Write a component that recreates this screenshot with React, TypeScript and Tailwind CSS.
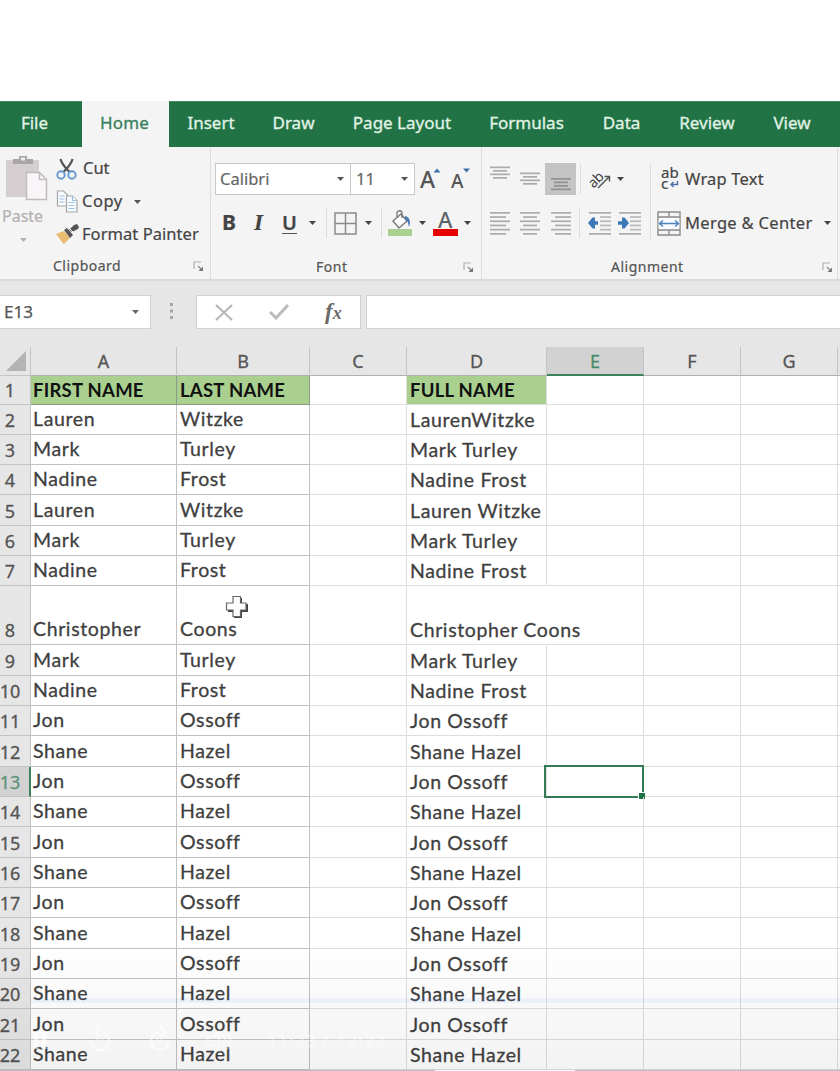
import React from "react";

const people: [string, string, string][] = [
  ["Lauren", "Witzke", "LaurenWitzke"],
  ["Mark", "Turley", "Mark Turley"],
  ["Nadine", "Frost", "Nadine Frost"],
  ["Lauren", "Witzke", "Lauren Witzke"],
  ["Mark", "Turley", "Mark Turley"],
  ["Nadine", "Frost", "Nadine Frost"],
  ["Christopher", "Coons", "Christopher Coons"],
  ["Mark", "Turley", "Mark Turley"],
  ["Nadine", "Frost", "Nadine Frost"],
  ...Array.from({ length: 12 }, (_, i): [string, string, string] =>
    i % 2 === 0 ? ["Jon", "Ossoff", "Jon Ossoff"] : ["Shane", "Hazel", "Shane Hazel"]
  ),
];

function rowHeight(n: number) {
  if (n === 1) return "h-[29px]";
  if (n === 8) return "h-[59px]";
  if (n === 5) return "h-[31px]";
  if (n > 8 && n % 3 === 0) return "h-[31px]";
  return "h-[30px]";
}

function Caret({ className = "" }: { className?: string }) {
  return (
    <svg className={"shrink-0 " + className} width="7" height="4" viewBox="0 0 7 4">
      <path d="M0 0h7L3.500 4z" fill="currentColor" />
    </svg>
  );
}

function Launcher() {
  return (
    <svg width="11" height="11" viewBox="0 0 11 11" fill="none">
      <path d="M1 8V1h7" stroke="#b0b0b0" strokeWidth="1.200" />
      <path d="M5 5l3 3" stroke="#888" strokeWidth="1.200" />
      <path d="M10 5.500V10H5.500z" fill="#777" />
    </svg>
  );
}

function Lines({ rows, color = "#ababab" }: { rows: [number, number, number][]; color?: string }) {
  return (
    <svg width="22" height="26" viewBox="0 0 22 26" className="shrink-0">
      {rows.map(([x, y, w]) => (
        <rect key={y} x={x} y={y} width={w} height="1.700" fill={color} />
      ))}
    </svg>
  );
}

function Indent({ right = false }: { right?: boolean }) {
  return (
    <svg width="24" height="26" viewBox="0 0 24 26" className="shrink-0">
      {[2, 23].map((y) => (
        <rect key={y} x="1" y={y} width="22" height="1.700" fill="#ababab" />
      ))}
      {[6.2, 10.4, 14.6, 18.8].map((y) => (
        <rect key={y} x="12" y={y} width="11" height="1.700" fill="#b8b8b8" />
      ))}
      {right ? (
        <path d="M0 11.200h4V7.500h2.500l4.500 5.500-4.500 5.500H4v-3.700H0z" fill="#3a78b8" />
      ) : (
        <path d="M10 11.200H7V7.500H4.500L0 13l4.500 5.500H7v-3.700h3z" fill="#3a78b8" />
      )}
    </svg>
  );
}

function Tabs() {
  const tab = "flex items-center justify-center shrink-0 whitespace-nowrap pb-[3px]";
  return (
    <nav className="flex h-[46px] bg-[#217346] text-[17px] text-[#e2f3e6] border-t border-[#3f8a60] [-webkit-text-stroke:0.3px]">
      <div className={tab + " w-[82px] pr-[13px]"}>File</div>
      <div className={tab + " w-[87px] bg-[#f4f4f4] text-[#397f5b] -mt-px h-[47px] pr-[2px] tracking-[0.2px]"}>Home</div>
      <div className={tab + " w-[84px]"}>Insert</div>
      <div className={tab + " w-[81px]"}>Draw</div>
      <div className={tab + " w-[136px]"}>Page Layout</div>
      <div className={tab + " w-[113px]"}>Formulas</div>
      <div className={tab + " w-[77px]"}>Data</div>
      <div className={tab + " w-[94px]"}>Review</div>
      <div className={tab + " w-[76px]"}>View</div>
    </nav>
  );
}

function Clipboard() {
  return (
    <section className="flex flex-col w-[210px] shrink-0">
      <div className="flex h-[107px]">
        <div className="w-[56px] flex flex-col items-start pt-[8px] text-[#b5b0b0]">
          <svg width="44" height="47" viewBox="0 0 44 47" className="ml-[5px]">
            <rect x="1" y="5" width="33" height="37" rx="1" fill="#d4ced1" />
            <path d="M8 4h6V1h8v3h6v5H8z" fill="#aaa5a7" />
            <rect x="16" y="2.500" width="4" height="3" fill="#eee" />
            <path d="M21.500 17.500h13l7 7v20h-20z" fill="#f8f5f9" stroke="#c0babd" strokeWidth="1.500" />
            <path d="M34.500 17.500v7h7" fill="none" stroke="#c0babd" strokeWidth="1.500" />
          </svg>
          <span className="text-[16px] leading-[22px] ml-[2px] mt-[3px]">Paste</span>
          <Caret className="ml-[20px] mt-[11px]" />
        </div>
        <div className="flex flex-col text-[16.500px] text-[#444] pt-[5px]">
          <div className="flex h-[33px] items-center gap-[6px]">
            <svg width="21" height="22" viewBox="0 0 21 22" fill="none">
              <path d="M4.500 1c1 5 5 9 9 13M16.500 1c-1 5-5 9-9 13" stroke="#555" strokeWidth="2.200" />
              <circle cx="5" cy="17" r="3.700" stroke="#6398cf" strokeWidth="1.900" />
              <circle cx="16" cy="17" r="3.700" stroke="#6398cf" strokeWidth="1.900" />
            </svg>
            <span>Cut</span>
          </div>
          <div className="flex h-[33px] items-center gap-[4px]">
            <svg width="22" height="23" viewBox="0 0 22 23" fill="#f8fbff" stroke="#a5a5a5" strokeWidth="1.200">
              <path d="M1.500 1h6l4 4v11h-10z" />
              <path d="M3.500 6h5M3.500 9h5M3.500 12h5" stroke="#9dbedf" />
              <path d="M10.500 6h6l4.500 4.500V22H10.500z" />
              <path d="M16.500 6v4.500H21M12.500 12.500h6M12.500 15.500h6M12.500 18.500h6" stroke="#9dbedf" />
            </svg>
            <span className="tracking-[0.500px]">Copy</span>
            <Caret className="ml-[7px] text-[#555]" />
          </div>
          <div className="flex h-[33px] items-center gap-[3px]">
            <svg width="23" height="21" viewBox="0 0 23 21">
              <path d="M0 10l8-3 6 7-6 6-2-2z" fill="#e9bc70" />
              <path d="M8 6l3-2 6 7-3 3z" fill="#555" />
              <path d="M13 6l5-5 3-1 2 3-1 2-6 3z" fill="#555" />
              <path d="M13 4l4 4" stroke="#f4f4f4" strokeWidth="1" />
            </svg>
            <span className="whitespace-nowrap tracking-[0.050px]">Format Painter</span>
          </div>
        </div>
      </div>
      <div className="flex h-[27px] items-center text-[14px] text-[#555]">
        <span className="pl-[53px] flex-1 tracking-[0.500px]">Clipboard</span>
        <span className="mr-[6px] mt-px"><Launcher /></span>
      </div>
    </section>
  );
}

function FontGroup() {
  return (
    <section className="flex flex-col w-[271px] shrink-0 border-l border-[#dcdcdc]">
      <div className="flex h-[32px] mt-[16px] ml-[4px] items-center">
        <div className="flex items-center justify-between w-[136px] h-[32px] bg-white border border-[#c8c8c8] pl-[4px] pr-[6px] text-[16.500px] text-[#666]">
          Calibri <Caret className="text-[#555]" />
        </div>
        <div className="flex items-center justify-between w-[64px] h-[32px] bg-white border border-l-0 border-[#c8c8c8] pl-[5px] pr-[6px] text-[16.500px] text-[#666]">
          11 <Caret className="text-[#555]" />
        </div>
        <svg width="50" height="26" viewBox="0 0 50 26" className="ml-[5px] overflow-visible">
          <text x="0" y="22" fontFamily="Noto Sans" fontSize="23" fontWeight="500" fill="#555">A</text>
          <path d="M13.500 6.500L17 2.500l3.500 4z" fill="#3a6fa8" />
          <text x="31" y="22" fontFamily="Noto Sans" fontSize="19" fontWeight="500" fill="#555">A</text>
          <path d="M43 2.500h7l-3.500 4z" fill="#3a6fa8" />
        </svg>
      </div>
      <div className="flex h-[32px] mt-[12px] items-center text-[#444]">
        <b className="text-[21px] w-[16px] ml-[11px]">B</b>
        <span className="font-['Liberation_Serif'] italic font-bold text-[23px] w-[16px] ml-[16px]">I</span>
        <span className="text-[20px] font-semibold leading-[20px] border-b-[1.500px] border-[#555] w-[15px] text-center ml-[12px]">U</span>
        <Caret className="ml-[12px]" />
        <span className="w-px h-[30px] bg-[#dcdcdc] ml-[10px]" />
        <svg width="23" height="23" viewBox="0 0 23 23" className="ml-[7px] -mr-px" fill="none" stroke="#8a8a8a" strokeWidth="1.500">
          <path d="M1 1h21v21H1zM11.500 1v21M1 11.500h21" />
        </svg>
        <Caret className="ml-[9px]" />
        <span className="w-px h-[30px] bg-[#dcdcdc] ml-[9px]" />
        <svg width="25" height="26" viewBox="0 0 25 26" className="ml-[6px]">
          <path d="M5 11l8-7 6 7-8 7z" fill="#fff" stroke="#777" strokeWidth="1.400" />
          <path d="M9 7V3c0-3 5-3 5 0v5" fill="none" stroke="#777" strokeWidth="1.300" />
          <path d="M17 6c5 1 6 6 4 11-1-4-1-6-4-8z" fill="#4a7cb8" />
          <rect x="0" y="19" width="24" height="7" fill="#a9d08e" />
        </svg>
        <Caret className="ml-[6px]" />
        <svg width="25" height="26" viewBox="0 0 25 26" className="ml-[7px] overflow-visible">
          <text x="5" y="18" fontFamily="Noto Sans" fontSize="22" fontWeight="500" fill="#5a6468">A</text>
          <rect x="0" y="19" width="25" height="7" fill="#e60000" />
        </svg>
        <Caret className="ml-[6px]" />
      </div>
      <div className="flex h-[27px] mt-[15px] items-center text-[14px] text-[#555]">
        <span className="pl-[105px] flex-1 tracking-[0.500px]">Font</span>
        <span className="mr-[7px] mt-px"><Launcher /></span>
      </div>
    </section>
  );
}

function Alignment() {
  return (
    <section className="flex flex-col w-[357px] shrink-0 border-x border-[#dcdcdc] text-[#444]">
      <div className="flex h-[92px]">
        <div className="flex flex-col w-[168px] pt-[16px]">
          <div className="flex h-[32px] items-center">
            <span className="ml-[7px]"><Lines rows={[[1, 0.5, 20], [4, 4, 14], [1, 7.5, 20], [4, 11, 14]]} /></span>
            <span className="ml-[8px]"><Lines rows={[[1, 6.5, 20], [4, 10, 14], [1, 13.5, 20], [4, 17, 14]]} /></span>
            <span className="ml-[4px] w-[31px] h-[32px] bg-[#c4c4c4] flex items-center justify-center">
              <Lines color="#929292" rows={[[1, 12, 20], [4, 15.5, 14], [4, 19, 14], [1, 22.5, 20]]} />
            </span>
            <span className="w-px h-[30px] bg-[#dcdcdc] ml-[4px]" />
            <svg width="24" height="24" viewBox="0 0 24 24" className="ml-[8px] overflow-visible">
              <text x="0" y="17" transform="rotate(-45 8 14)" fontFamily="Noto Sans" fontSize="14" fill="#444" letterSpacing="-0.5">ab</text>
              <path d="M9 21L20 10M15.500 9.500h5v5" fill="none" stroke="#555" strokeWidth="1.500" />
            </svg>
            <Caret className="ml-[4px]" />
          </div>
          <div className="flex h-[32px] mt-[12px] items-center">
            <span className="ml-[7px]"><Lines rows={[[1, 2, 20], [1, 6.2, 16], [1, 10.4, 20], [1, 14.6, 16], [1, 18.8, 20], [1, 23, 16]]} /></span>
            <span className="ml-[8px]"><Lines rows={[[1, 2, 20], [4, 6.2, 14], [1, 10.4, 20], [4, 14.6, 14], [1, 18.8, 20], [4, 23, 14]]} /></span>
            <span className="ml-[9px]"><Lines rows={[[1, 2, 20], [5, 6.2, 16], [1, 10.4, 20], [5, 14.6, 16], [1, 18.8, 20], [5, 23, 16]]} /></span>
            <span className="w-px h-[30px] bg-[#dcdcdc] ml-[7px]" />
            <span className="ml-[8px]"><Indent /></span>
            <span className="ml-[6px]"><Indent right /></span>
          </div>
        </div>
        <div className="flex flex-col flex-1 pt-[16px] text-[16.500px]">
          <div className="flex h-[32px] items-center border-l border-[#dcdcdc] pl-[10px]">
            <div className="flex flex-col w-[20px] text-[15px] leading-[11px] pb-[3px]">
              <span>ab</span>
              <span className="flex items-center">
                c
                <svg width="9" height="8" viewBox="0 0 9 8" className="ml-[2px] mt-[3px]" fill="none" stroke="#4a6fa8" strokeWidth="1.400">
                  <path d="M7.500 0v3.500H1M3.500 1L1 3.500 3.500 6" />
                </svg>
              </span>
            </div>
            <span className="ml-[4px] whitespace-nowrap tracking-[0.200px]">Wrap Text</span>
          </div>
          <div className="flex h-[44px] pt-[12px] items-center border-l border-[#dcdcdc] pl-[6px]">
            <svg width="24" height="25" viewBox="0 0 24 25" fill="none" stroke="#8a8a8a" strokeWidth="1.400">
              <path d="M1 1h22v23H1zM1 6h22M1 19h22M12 1v5M12 19v5" />
              <rect x="1.700" y="7" width="20.600" height="11" fill="#f8fbff" stroke="none" />
              <path d="M3 12.500h18M6 9.500l-3.500 3 3.500 3M18 9.500l3.500 3-3.500 3" stroke="#4a83bd" />
            </svg>
            <span className="ml-[4px] whitespace-nowrap tracking-[0.320px]">Merge &amp; Center</span>
            <Caret className="ml-[11px]" />
          </div>
        </div>
      </div>
      <div className="flex h-[27px] mt-[15px] items-center text-[14px] text-[#555]">
        <span className="pl-[129px] flex-1 tracking-[0.500px]">Alignment</span>
        <span className="mr-[4px] mt-px"><Launcher /></span>
      </div>
    </section>
  );
}

function FormulaBar() {
  const box = "h-[34px] bg-white border border-[#d0d0d0] flex items-center";
  return (
    <div className="h-[68px] bg-[#e6e6e6] border-t-2 border-[#dadada] flex items-start pt-[14px]">
      <div className={box + " w-[151px] border-l-0 pl-[4px] pr-[11px] justify-between text-[17px] text-[#555] [-webkit-text-stroke:0.25px]"}>
        E13 <Caret className="text-[#666]" />
      </div>
      <svg width="4" height="18" viewBox="0 0 4 18" className="ml-[19px] mt-[8px]" fill="#a5a5a5">
        <rect width="3" height="3" y="0" /><rect width="3" height="3" y="6.500" /><rect width="3" height="3" y="13" />
      </svg>
      <div className={box + " w-[165px] ml-[22px]"}>
        <svg width="18" height="17" viewBox="0 0 18 17" className="ml-[18px]" stroke="#b5b5b5" strokeWidth="2" fill="none">
          <path d="M1 1l16 15M17 1L1 16" />
        </svg>
        <svg width="20" height="16" viewBox="0 0 20 16" className="ml-[36px]" stroke="#bcbcbc" strokeWidth="3" fill="none">
          <path d="M1 8l6 6L19 1" />
        </svg>
        <span className="ml-[36px] font-['Liberation_Serif'] italic font-bold text-[23px] leading-[24px] text-[#6a6a6a]">
          f<span className="text-[18px]">x</span>
        </span>
      </div>
      <div className={box + " flex-1 ml-[5px] border-r-0"} />
    </div>
  );
}

const columns: [string, string][] = [
  ["A", "w-[146px]"],
  ["B", "w-[133px]"],
  ["C", "w-[97px]"],
  ["D", "w-[140px]"],
  ["E", "w-[97px]"],
  ["F", "w-[97px]"],
  ["G", "w-[97px]"],
];

function Sheet() {
  return (
    <div className="flex flex-col [-webkit-text-stroke:0.3px]">
      <div className="flex h-[29px] bg-[#e6e6e6] text-[18px] text-[#555]">
        <div className="w-[31px] shrink-0 border-r border-b border-[#c4c4c4] flex justify-end items-end pb-[4px] pr-[4px]">
          <svg width="20" height="20" viewBox="0 0 20 20"><path d="M20 0v20H0z" fill="#b4b4b4" /></svg>
        </div>
        {columns.map(([name, w]) => (
          <div
            key={name}
            className={
              w + " shrink-0 flex items-center justify-center pt-px border-r border-r-[#c4c4c4] " +
              (name === "E" ? "bg-[#d2d2d2] text-[#4a8c69] border-b-2 border-b-[#3d8059]" : "border-b border-b-[#b0b0b0]")
            }
          >
            {name}
          </div>
        ))}
        <div className="flex-1 border-b border-[#b0b0b0]" />
      </div>
      {[["FIRST NAME", "LAST NAME", "FULL NAME"], ...people].map((p, i) => {
        const n = i + 1;
        const head = n === 1;
        const cell = "shrink-0 flex items-end border-r border-b whitespace-nowrap ";
        const text = head
          ? "bg-[#a9d08e] font-bold text-[#111] text-[18.500px] tracking-[0.250px] leading-[28px] [-webkit-text-stroke:0px] "
          : "text-[#3f3f3f] text-[19.500px] tracking-[0.620px] ";
        const lead = head ? "" : "leading-[30px] ";
        return (
          <div key={n} className={"flex " + rowHeight(n) + " font-['Lato','Carlito',sans-serif]"}>
            <div
              className={
                "w-[31px] shrink-0 flex items-end justify-center border-b border-[#c4c4c4] leading-[27px] text-[18px] font-['Noto_Sans',sans-serif] " +
                (n === 13 ? "bg-[#d2d2d2] text-[#5d9379] border-r-2 border-r-[#3d8059] pr-[9px]" : "bg-[#e6e6e6] text-[#555] border-r pr-[10px]")
              }
            >
              {n}
            </div>
            <div className={cell + text + lead + (head ? "border-[#8c9c84] " : "border-[#c2c2c2] ") + "w-[146px] pl-[2px]"}>{p[0]}</div>
            <div className={cell + text + lead + (head ? "border-[#8c9c84] " : "border-[#c2c2c2] ") + "w-[133px] pl-[3px]"}>{p[1]}</div>
            <div className="w-[97px] shrink-0 border-r border-b border-[#dedede]" />
            <div
              className={
                cell + text +
                (head ? "" : "leading-[29px] ") +
                (n === 8 ? "border-r-transparent border-b-[#dedede] " : "border-[#dedede] ") +
                "w-[140px] pl-[3px]"
              }
            >
              {p[2]}
            </div>
            <div className="w-[97px] shrink-0 border-r border-b border-[#dedede] relative">
              {n === 13 && (
                <div className="absolute -left-[3px] -top-[2px] w-[100px] h-[33px] border-2 border-[#347a54]">
                  <span className="absolute -right-[3px] -bottom-[3px] w-[7px] h-[7px] bg-[#217346] border-t border-l border-white" />
                </div>
              )}
            </div>
            <div className="w-[97px] shrink-0 border-r border-b border-[#dedede]" />
            <div className="w-[97px] shrink-0 border-r border-b border-[#dedede]" />
            <div className="flex-1 border-b border-[#dedede]" />
          </div>
        );
      })}
    </div>
  );
}

function CellCursor() {
  return (
    <svg className="absolute left-[225px] top-[595px]" width="24" height="24" viewBox="0 0 24 24">
      <path d="M9 3h8v6h6v8h-6v6H9v-6H3V9h6z" fill="#444" />
      <path d="M8 1.500h7.500v6.500H21v7h-5.500v6.500H8V15H1.500V8H8z" fill="#fff" stroke="#666" strokeWidth="1.200" />
    </svg>
  );
}

function PlayerOverlay() {
  return (
    <div className="absolute inset-x-0 bottom-0 h-[131px] bg-gradient-to-b from-transparent to-black/5 pointer-events-none">
      <div className="absolute left-[30px] right-0 top-[58px] h-[5px] bg-[#4a86ff]/8" />
      <svg className="absolute left-[30px] top-[84px]" width="360" height="34" viewBox="0 0 360 34" fill="none" stroke="#fff" strokeOpacity="0.6" strokeWidth="2.500">
        <path d="M6 8v17M14 8v17" strokeWidth="5" />
        <path d="M61 17a9 9 0 1 0 9-9M70 3l-5 5 5 5" />
        <path d="M139 17a9 9 0 1 1-9-9M130 3l5 5-5 5" />
        <text x="65" y="21" fontSize="8" fontFamily="Noto Sans" fill="#fff" fillOpacity="0.6" stroke="none">10</text>
        <text x="125" y="21" fontSize="8" fontFamily="Noto Sans" fill="#fff" fillOpacity="0.6" stroke="none">10</text>
        <path d="M178 13h5l6-5v18l-6-5h-5zM193 12q5 5 0 10M197 9q7 8 0 16" strokeOpacity="0.4" />
        <text x="237" y="23" fontSize="17" fontFamily="Noto Sans" fill="#fff" fillOpacity="0.5" stroke="none" textLength="118">11:23 / 12:22</text>
      </svg>
      <div className="absolute inset-x-0 bottom-0 h-px bg-[#bdbdbd]" />
      <div className="absolute left-[435px] w-[140px] bottom-0 h-px bg-white" />
    </div>
  );
}

export default function App() {
  return (
    <div className="relative w-[840px] h-[1071px] overflow-hidden bg-white pt-[101px] font-['Noto_Sans',sans-serif]">
      <Tabs />
      <div className="flex h-[132px] bg-[#f4f4f4] [-webkit-text-stroke:0.2px]">
        <Clipboard />
        <FontGroup />
        <Alignment />
      </div>
      <FormulaBar />
      <Sheet />
      <CellCursor />
      <PlayerOverlay />
    </div>
  );
}
